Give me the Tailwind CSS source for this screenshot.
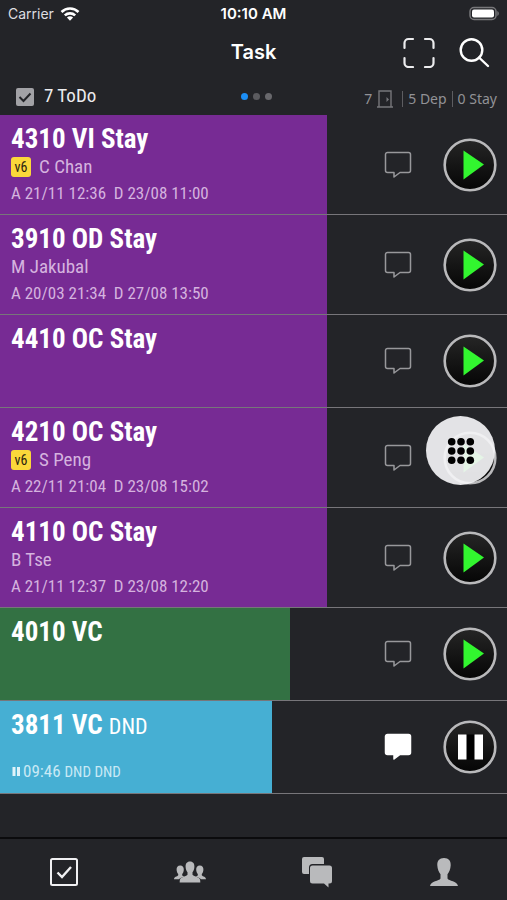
<!DOCTYPE html>
<html lang="en">
<head>
    <meta charset="UTF-8">
    <meta name="viewport" content="width=device-width, initial-scale=1.0">
    <title>Task</title>
    <script src="https://cdn.jsdelivr.net/npm/@tailwindcss/browser@4"></script>
</head>
<body class="bg-[#232428] text-white font-['Roboto_Condensed','Liberation_Sans_Narrow','Roboto',sans-serif]">
    <!-- Shared icons -->
    <svg class="hidden" aria-hidden="true">
        <symbol id="chat" viewBox="0 0 28 28">
            <path d="M3.500 1.500h21a2 2 0 0 1 2 2v16a2 2 0 0 1-2 2H16L10 26v-4.500H3.500a2 2 0 0 1-2-2v-16a2 2 0 0 1 2-2z" stroke-width="1.500" stroke-linejoin="round"/>
        </symbol>
        <symbol id="play" viewBox="0 0 54 54">
            <circle cx="27" cy="27" r="25.300" fill="url(#disc)" stroke="#b9b9bb" stroke-width="2.600"/>
            <path d="M20.500 12.500 41 26.500 20.500 41.500z" fill="#32f62f"/>
        </symbol>
        <symbol id="pause" viewBox="0 0 54 54">
            <circle cx="27" cy="27" r="25.300" fill="url(#disc)" stroke="#b9b9bb" stroke-width="2.600"/>
            <path d="M23 14.500h9v25h-9z" fill="#000"/>
            <path d="M15 14.500h8.500v25H15zM31.500 14.500H40v25h-8.500z" fill="#fff"/>
        </symbol>
    </svg>
    <svg class="absolute size-0" aria-hidden="true">
        <defs>
            <linearGradient id="disc" x1="0" y1="0" x2="0" y2="1">
                <stop offset="0" stop-color="#262626"/>
                <stop offset="1" stop-color="#050505"/>
            </linearGradient>
        </defs>
    </svg>

    <div class="relative flex min-h-screen flex-col">
        <!-- Status bar -->
        <div class="grid h-7 grid-cols-3 items-center px-2 font-['Inter',sans-serif] text-sm">
            <div class="flex items-center gap-1.5">
                <span class="text-[#dedee0]">Carrier</span>
                <svg class="h-4 w-5" viewBox="0 0 20 16" fill="none" stroke="#fff" stroke-width="2.600">
                    <path d="M1.500 6a12.200 12.200 0 0 1 17 0M4.800 9.400a7.600 7.600 0 0 1 10.400 0"/>
                    <path d="M10 14.800 6.900 11.600a4.600 4.600 0 0 1 6.200 0z" fill="#fff" stroke="none"/>
                </svg>
            </div>
            <div class="text-center text-[15px] font-semibold">10:10 AM</div>
            <svg class="h-4 w-[30px] justify-self-end" viewBox="0 0 30 16">
                <rect x="1" y="1.500" width="26" height="12" rx="4" fill="none" stroke="#77777a" stroke-width="1.500"/>
                <rect x="3" y="3.500" width="22" height="8" rx="2" fill="#fff"/>
                <path d="M28.300 5c2 .8 2 4.200 0 5z" fill="#77777a"/>
            </svg>
        </div>

        <!-- Navigation bar -->
        <header class="grid h-12 grid-cols-3 items-center px-4">
            <h1 class="col-start-2 text-center font-['Inter',sans-serif] text-xl font-semibold">Task</h1>
            <div class="flex items-center justify-end gap-6">
                <button type="button" aria-label="Scan">
                    <svg class="block h-8 w-8" viewBox="0 0 32 32" fill="none" stroke="#ececee" stroke-width="2.200" stroke-linecap="round">
                        <path d="M1.500 12V7a4 4 0 0 1 4-4H10M22 3h4.500a4 4 0 0 1 4 4v5M30.500 22v5a4 4 0 0 1-4 4H22M10 31H5.500a4 4 0 0 1-4-4v-5"/>
                    </svg>
                </button>
                <button type="button" aria-label="Search">
                    <svg class="block h-8 w-8" viewBox="0 0 32 32" fill="none" stroke="#fff" stroke-width="2.400" stroke-linecap="round">
                        <circle cx="12.500" cy="14" r="10.800"/>
                        <path d="m20 21.500 9 8.500"/>
                    </svg>
                </button>
            </div>
        </header>

        <!-- List summary -->
        <div class="grid h-[39px] grid-cols-[1fr_auto_1fr] items-center pt-0.5 pr-2.5 pl-4">
            <label class="flex items-center gap-2.5 text-[19px] text-[#ececee]">
                <span class="grid size-[18px] place-items-center">
                    <input type="checkbox" checked class="col-start-1 row-start-1 size-[18px] appearance-none rounded-xs bg-[#a2a2a6]">
                    <svg class="pointer-events-none col-start-1 row-start-1 size-[18px]" viewBox="0 0 18 18" fill="none" stroke="#232428" stroke-width="2">
                        <path d="m3.500 9 4 4L14.500 5.500"/>
                    </svg>
                </span>
                7 ToDo
            </label>
            <div class="flex gap-[5px]">
                <span class="size-[7px] rounded-full bg-[#1b8ef5]"></span>
                <span class="size-[7px] rounded-full bg-[#5b5b5f]"></span>
                <span class="size-[7px] rounded-full bg-[#68686c]"></span>
            </div>
            <div class="flex items-center justify-end gap-[5px] pt-1 font-['Noto_Sans',sans-serif] text-sm text-[#929296]">
                <span>7</span>
                <svg class="h-[18px] w-4" viewBox="0 0 16 18" fill="none" stroke="#77777b" stroke-width="1.400">
                    <path d="M2 17V1h12v16M0 17h16"/>
                    <path d="m9.500 7 2.500 2.500-2.500 2.500z" fill="#77777b" stroke="none"/>
                </svg>
                <span class="ml-1 h-4 w-px bg-[#5d5d61]"></span>
                <span>5 Dep</span>
                <span class="h-4 w-px bg-[#5d5d61]"></span>
                <span>0 Stay</span>
            </div>
        </div>

        <!-- Tasks -->
        <main class="flex-1">
            <ul>
                <li class="relative flex min-h-[100px] border-b border-[#77767a]">
                    <div class="flex flex-col bg-[#772b94] pt-2 pb-[7px] pl-[11px]" style="width: 64.4%">
                        <h2 class="text-[27px] leading-8 font-bold">4310 VI Stay</h2>
                        <p class="flex items-center gap-2 text-[19px] leading-6 text-[#d5b3df]"><span class="w-5 rounded-[3px] bg-[#fbd83a] text-center text-sm leading-5 text-[#2b2410]">v6</span>C Chan</p>
                        <p class="text-[17px] leading-7 whitespace-pre text-[#d5b3df]">A 21/11 12:36  D 23/08 11:00</p>
                    </div>
                    <div class="flex flex-1 items-center justify-end gap-[31px] pr-2.5">
                        <button type="button" aria-label="Comment"><svg class="block size-7 fill-none stroke-[#98989b]"><use href="#chat"/></svg></button>
                        <button type="button" aria-label="Start"><svg class="block size-[54px]"><use href="#play"/></svg></button>
                    </div>
                </li>
                <li class="relative flex min-h-[100px] border-b border-[#77767a]">
                    <div class="flex flex-col bg-[#772b94] pt-2 pb-[7px] pl-[11px]" style="width: 64.4%">
                        <h2 class="text-[27px] leading-8 font-bold">3910 OD Stay</h2>
                        <p class="text-[19px] leading-6 text-[#d5b3df]">M Jakubal</p>
                        <p class="text-[17px] leading-7 whitespace-pre text-[#d5b3df]">A 20/03 21:34  D 27/08 13:50</p>
                    </div>
                    <div class="flex flex-1 items-center justify-end gap-[31px] pr-2.5">
                        <button type="button" aria-label="Comment"><svg class="block size-7 fill-none stroke-[#98989b]"><use href="#chat"/></svg></button>
                        <button type="button" aria-label="Start"><svg class="block size-[54px]"><use href="#play"/></svg></button>
                    </div>
                </li>
                <li class="relative flex min-h-[93px] border-b border-[#77767a]">
                    <div class="flex flex-col bg-[#772b94] pt-2 pb-[7px] pl-[11px]" style="width: 64.4%">
                        <h2 class="text-[27px] leading-8 font-bold">4410 OC Stay</h2>
                    </div>
                    <div class="flex flex-1 items-center justify-end gap-[31px] pr-2.5">
                        <button type="button" aria-label="Comment"><svg class="block size-7 fill-none stroke-[#98989b]"><use href="#chat"/></svg></button>
                        <button type="button" aria-label="Start"><svg class="block size-[54px]"><use href="#play"/></svg></button>
                    </div>
                </li>
                <li class="relative flex min-h-[100px] border-b border-[#77767a]">
                    <div class="flex flex-col bg-[#772b94] pt-2 pb-[7px] pl-[11px]" style="width: 64.4%">
                        <h2 class="text-[27px] leading-8 font-bold">4210 OC Stay</h2>
                        <p class="flex items-center gap-2 text-[19px] leading-6 text-[#d5b3df]"><span class="w-5 rounded-[3px] bg-[#fbd83a] text-center text-sm leading-5 text-[#2b2410]">v6</span>S Peng</p>
                        <p class="text-[17px] leading-7 whitespace-pre text-[#d5b3df]">A 22/11 21:04  D 23/08 15:02</p>
                    </div>
                    <div class="flex flex-1 items-center justify-end gap-[31px] pr-2.5">
                        <button type="button" aria-label="Comment"><svg class="block size-7 fill-none stroke-[#98989b]"><use href="#chat"/></svg></button>
                        <button type="button" aria-label="Start"><svg class="block size-[54px]"><use href="#play"/></svg></button>
                    </div>
                    <!-- Floating keypad button -->
                    <button type="button" aria-label="Menu" class="absolute top-2 right-3 grid size-[69px] place-items-center rounded-full bg-[#f4f4f6]/92">
                        <svg class="size-7" viewBox="0 0 28 28" fill="#000">
                            <circle cx="4.700" cy="4.700" r="3.800"/><circle cx="14" cy="4.700" r="3.800"/><circle cx="23.300" cy="4.700" r="3.800"/>
                            <circle cx="4.700" cy="14" r="3.800"/><circle cx="14" cy="14" r="3.800"/><circle cx="23.300" cy="14" r="3.800"/>
                            <circle cx="4.700" cy="23.300" r="3.800"/><circle cx="14" cy="23.300" r="3.800"/><circle cx="23.300" cy="23.300" r="3.800"/>
                        </svg>
                    </button>
                </li>
                <li class="relative flex min-h-[100px] border-b border-[#77767a]">
                    <div class="flex flex-col bg-[#772b94] pt-2 pb-[7px] pl-[11px]" style="width: 64.4%">
                        <h2 class="text-[27px] leading-8 font-bold">4110 OC Stay</h2>
                        <p class="text-[19px] leading-6 text-[#d5b3df]">B Tse</p>
                        <p class="text-[17px] leading-7 whitespace-pre text-[#d5b3df]">A 21/11 12:37  D 23/08 12:20</p>
                    </div>
                    <div class="flex flex-1 items-center justify-end gap-[31px] pr-2.5">
                        <button type="button" aria-label="Comment"><svg class="block size-7 fill-none stroke-[#98989b]"><use href="#chat"/></svg></button>
                        <button type="button" aria-label="Start"><svg class="block size-[54px]"><use href="#play"/></svg></button>
                    </div>
                </li>
                <li class="relative flex min-h-[93px] border-b border-[#77767a]">
                    <div class="flex flex-col bg-[#337143] pt-2 pb-[7px] pl-[11px]" style="width: 57.2%">
                        <h2 class="text-[27px] leading-8 font-bold">4010 VC</h2>
                    </div>
                    <div class="flex flex-1 items-center justify-end gap-[31px] pr-2.5">
                        <button type="button" aria-label="Comment"><svg class="block size-7 fill-none stroke-[#98989b]"><use href="#chat"/></svg></button>
                        <button type="button" aria-label="Start"><svg class="block size-[54px]"><use href="#play"/></svg></button>
                    </div>
                </li>
                <li class="relative flex min-h-[93px] border-b border-[#77767a]">
                    <div class="flex flex-col justify-between bg-[#46afd3] pt-2 pb-[7px] pl-[11px]" style="width: 53.7%">
                        <h2 class="text-[27px] leading-8 font-bold">3811 VC <span class="text-[22px] font-normal">DND</span></h2>
                        <p class="flex items-baseline gap-1 text-[17px] leading-7 text-[#c9e9f5]">
                            <span class="flex items-baseline gap-[3px]">
                                <svg class="h-[10px] w-[9px]" viewBox="0 0 9 10" fill="#dff3fa"><path d="M1.500 0h3v9h-3zM6 0h3v9H6z"/></svg>09:46</span>
                            <span class="text-[15px]">DND DND</span>
                        </p>
                    </div>
                    <div class="flex flex-1 items-center justify-end gap-[31px] pr-2.5">
                        <button type="button" aria-label="Comment"><svg class="block size-7 fill-white stroke-white"><use href="#chat"/></svg></button>
                        <button type="button" aria-label="Pause"><svg class="block size-[54px]"><use href="#pause"/></svg></button>
                    </div>
                </li>
            </ul>
        </main>

        <!-- Tab bar -->
        <nav class="grid h-[63px] grid-cols-4 place-items-center border-t-2 border-[#0b0b0d] pt-1 text-[#b9babc]">
            <a href="#tasks" aria-label="Tasks">
                <svg class="block size-8" viewBox="0 0 32 32" fill="none" stroke="#f0f0f2" stroke-width="2">
                    <rect x="4" y="3" width="26" height="26" rx="1.500"/>
                    <path d="m10.500 16.500 4.500 4.500 9-10" stroke-width="2.400"/>
                </svg>
            </a>
            <a href="#team" aria-label="Team">
                <svg class="block h-8 w-8" viewBox="0 0 32 32" fill="currentColor">
                    <path d="M16 5.500c3.200 0 4.600 2.300 4.400 5.300-.1 2.400-.9 4.200-1.900 5.400v2.600c.8 1.700 6.700 2 7.500 4.600.3.900.3 2.600.3 3.100H5.700c0-.5 0-2.200.3-3.100.8-2.600 6.700-2.900 7.500-4.600v-2.600c-1-1.200-1.800-3-1.900-5.400-.2-3 1.200-5.300 4.400-5.300z"/>
                    <path d="M6.200 9.500c2.500 0 3.700 1.700 3.600 4.200-.1 1.900-.7 3.400-1.600 4.300v1.200c.3.600 1.300.9 2.300 1.300-2.500.8-4.500 1.400-5.300 2.700H0c0-2.600 3-2.500 4.200-4V18c-.9-.9-1.500-2.400-1.600-4.300-.1-2.500 1.100-4.200 3.600-4.200zM25.800 9.500c-2.500 0-3.700 1.700-3.600 4.200.1 1.900.7 3.400 1.600 4.300v1.200c-.3.600-1.300.9-2.300 1.300 2.500.8 4.500 1.400 5.300 2.700H32c0-2.600-3-2.500-4.200-4V18c.9-.9 1.500-2.400 1.600-4.300.1-2.500-1.100-4.200-3.600-4.200z"/>
                </svg>
            </a>
            <a href="#messages" aria-label="Messages">
                <svg class="block size-8" viewBox="0 0 32 32" fill="currentColor">
                    <path d="M3 1h18a2 2 0 0 1 2 2v5H11.500A3.500 3.500 0 0 0 8 11.500V18H3a2 2 0 0 1-2-2V3a2 2 0 0 1 2-2z"/>
                    <path d="M11.500 9.500h17a2.500 2.500 0 0 1 2.500 2.500v13a2.500 2.500 0 0 1-2.500 2.500h-1V31.500l-4.500-4h-11.500A2.500 2.500 0 0 1 9 25V12a2.500 2.500 0 0 1 2.500-2.500z"/>
                </svg>
            </a>
            <a href="#profile" aria-label="Profile">
                <svg class="block size-8" viewBox="0 0 32 32" fill="currentColor">
                    <path d="M16 2c4.700 0 6.900 3 6.700 7.300-.2 4-1.500 7.100-3.200 9v4.200c1.400 2.800 9.500 2.300 10.500 7.500H2c1-5.200 9.100-4.700 10.500-7.500v-4.200c-1.700-1.900-3-5-3.200-9C9.100 5 11.300 2 16 2z"/>
                </svg>
            </a>
        </nav>
    </div>
</body>
</html>
